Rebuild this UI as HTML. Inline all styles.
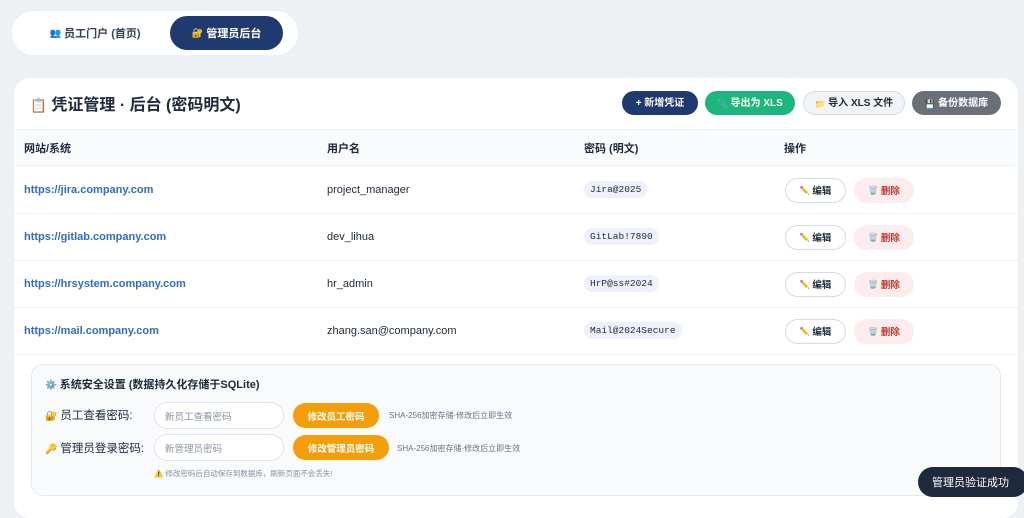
<!DOCTYPE html>
<html><head><meta charset="utf-8"><style>
*{box-sizing:border-box;margin:0;padding:0}
body{width:1024px;height:508px;overflow:hidden;background:#eef1f4;font-family:"Liberation Sans","Noto Sans CJK SC",sans-serif;color:#1e293b;position:relative}
.a{position:absolute}
.e{font-size:0.85em}
.pill{left:12px;top:11px;width:286px;height:44px;background:#fff;border-radius:22px}
.tab{display:flex;align-items:center;justify-content:center;font-size:11px;font-weight:bold;height:34px;border-radius:17px}
.card{left:14px;top:78px;width:1004px;height:440px;background:#fff;border-radius:16px}
.btn{display:flex;align-items:center;justify-content:center;font-size:10px;font-weight:bold;height:24px;border-radius:12px;top:91px;line-height:1;padding-top:2px}
.th{font-size:11px;font-weight:bold;top:140px}
.hdr{left:14px;top:129px;width:1004px;height:37px;background:#fafbfd;border-top:1px solid #eef1f5;border-bottom:1px solid #eef1f5}
.line{left:14px;width:1004px;height:1px;background:#eef1f5}
.td{font-size:11px}
.link{color:#2f6bd1;font-weight:bold}
.code{font-family:"Liberation Mono",monospace;font-size:9.5px;background:#eef1fb;border-radius:8px;padding:3px 6px}
.eb{width:61px;height:25px;border:1px solid #d5dbe3;border-radius:13px;background:#fff;font-size:9.5px;font-weight:bold;display:flex;align-items:center;justify-content:center;line-height:1;padding-top:2px}
.db{width:60px;height:25px;border-radius:13px;background:#fdecee;color:#c0392b;font-size:9.5px;font-weight:bold;display:flex;align-items:center;justify-content:center;line-height:1;padding-top:2px}
.set{left:31px;top:364px;width:970px;height:132px;background:#f8fafc;border:1px solid #e5e9ef;border-radius:12px}
.inp{width:130px;height:27px;border:1px solid #dfe4ea;border-radius:14px;background:#fff;font-size:9.5px;color:#8a94a3;padding-left:10px;display:flex;align-items:center}
.ob{height:25px;border-radius:13px;background:#f59e0b;color:#fff;font-size:9.5px;font-weight:bold;display:flex;align-items:center;justify-content:center}
.note{font-size:8px;color:#6b7280}
</style></head><body>
<div class="a pill"></div>
<div class="a tab" style="left:38px;top:16px;width:114px;color:#334155"><span class="e">👥</span>&nbsp;员工门户 (首页)</div>
<div class="a tab" style="left:170px;top:16px;width:113px;background:#1e3a6e;color:#fff"><span class="e">🔐</span>&nbsp;管理员后台</div>
<div class="a card"></div>
<div class="a" style="left:30px;top:91px;font-size:16px;font-weight:bold"><span class="e">📋</span> 凭证管理 · 后台 (密码明文)</div>
<div class="a btn" style="left:622px;width:76px;background:#1e3a6e;color:#fff">+ 新增凭证</div>
<div class="a btn" style="left:705px;width:90px;background:#1cb77e;color:#fff"><span class="e">📎</span>&nbsp;导出为 XLS</div>
<div class="a btn" style="left:803px;width:102px;background:#f1f4f7;border:1px solid #d5dbe3;color:#1e293b"><span class="e">📁</span>&nbsp;导入 XLS 文件</div>
<div class="a btn" style="left:912px;width:89px;background:#6b6f78;color:#fff"><span class="e">💾</span>&nbsp;备份数据库</div>
<div class="a hdr"></div>
<div class="a th" style="left:24px">网站/系统</div>
<div class="a th" style="left:327px">用户名</div>
<div class="a th" style="left:584px">密码 (明文)</div>
<div class="a th" style="left:784px">操作</div>

<div class="a line" style="top:213px"></div>
<div class="a line" style="top:260px"></div>
<div class="a line" style="top:307px"></div>
<div class="a line" style="top:354px"></div>

<div class="a td link" style="left:24px;top:184px">https://jira.company.com</div>
<div class="a td" style="left:327px;top:184px">project_manager</div>
<div class="a code" style="left:584px;top:181px">Jira@2025</div>
<div class="a eb" style="left:785px;top:178px"><span class="e">✏️</span>&nbsp;编辑</div>
<div class="a db" style="left:854px;top:178px"><span class="e">🗑️</span>&nbsp;删除</div>

<div class="a td link" style="left:24px;top:231px">https://gitlab.company.com</div>
<div class="a td" style="left:327px;top:231px">dev_lihua</div>
<div class="a code" style="left:584px;top:228px">GitLab!7890</div>
<div class="a eb" style="left:785px;top:225px"><span class="e">✏️</span>&nbsp;编辑</div>
<div class="a db" style="left:854px;top:225px"><span class="e">🗑️</span>&nbsp;删除</div>

<div class="a td link" style="left:24px;top:278px">https://hrsystem.company.com</div>
<div class="a td" style="left:327px;top:278px">hr_admin</div>
<div class="a code" style="left:584px;top:275px">HrP@ss#2024</div>
<div class="a eb" style="left:785px;top:272px"><span class="e">✏️</span>&nbsp;编辑</div>
<div class="a db" style="left:854px;top:272px"><span class="e">🗑️</span>&nbsp;删除</div>

<div class="a td link" style="left:24px;top:325px">https://mail.company.com</div>
<div class="a td" style="left:327px;top:325px">zhang.san@company.com</div>
<div class="a code" style="left:584px;top:322px">Mail@2024Secure</div>
<div class="a eb" style="left:785px;top:319px"><span class="e">✏️</span>&nbsp;编辑</div>
<div class="a db" style="left:854px;top:319px"><span class="e">🗑️</span>&nbsp;删除</div>

<div class="a set"></div>
<div class="a" style="left:45px;top:376px;font-size:11px;font-weight:bold"><span class="e">⚙️</span> 系统安全设置 (数据持久化存储于SQLite)</div>
<div class="a" style="left:45px;top:407px;font-size:11.5px"><span class="e">🔐</span> 员工查看密码:</div>
<div class="a inp" style="left:154px;top:402px">新员工查看密码</div>
<div class="a ob" style="left:293px;top:403px;width:86px">修改员工密码</div>
<div class="a note" style="left:389px;top:410px">SHA-256加密存储·修改后立即生效</div>
<div class="a" style="left:45px;top:440px;font-size:11.5px"><span class="e">🔑</span> 管理员登录密码:</div>
<div class="a inp" style="left:154px;top:434px">新管理员密码</div>
<div class="a ob" style="left:293px;top:435px;width:96px">修改管理员密码</div>
<div class="a note" style="left:397px;top:443px">SHA-256加密存储·修改后立即生效</div>
<div class="a" style="left:154px;top:468px;font-size:7.5px;color:#8a94a3">⚠️ 修改密码后自动保存到数据库，刷新页面不会丢失!</div>
<div class="a" style="left:918px;top:467px;width:110px;height:30px;background:#1e293b;color:#fff;border-radius:15px;font-size:11px;display:flex;align-items:center;padding-left:14px">管理员验证成功</div>
</body></html>
